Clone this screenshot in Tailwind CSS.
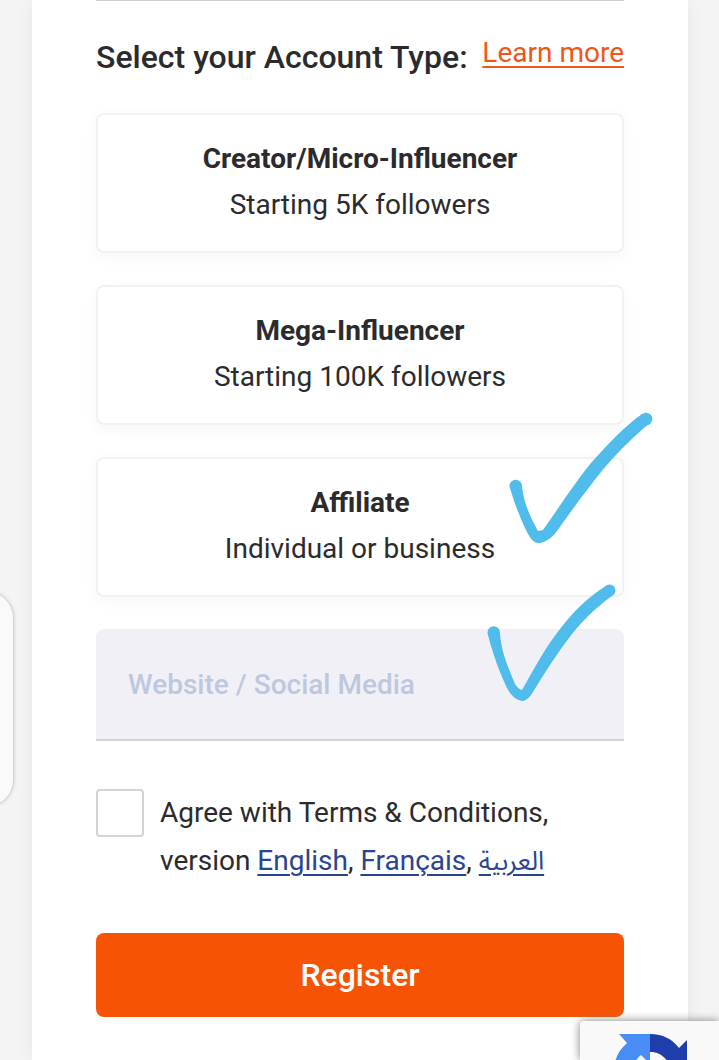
<!DOCTYPE html>
<html lang="en">
<head>
    <meta charset="UTF-8">
    <meta name="viewport" content="width=device-width, initial-scale=1.0">
    <title>Register</title>
    <script src="https://cdn.jsdelivr.net/npm/@tailwindcss/browser@4"></script>
</head>

<body class="bg-[#f4f4f4] font-[Roboto,'Noto_Sans',sans-serif] text-[28px] text-[#2b2b2d] overflow-x-hidden">

    <!--Form panel-->
    <main class="mx-8 mr-[31px] min-h-screen bg-white px-16 pb-11 shadow-[0_0_16px_rgba(0,0,0,0.06)]">
        <form>
            <div class="border-t border-[#cfcfcf]"></div>

            <div class="mt-9 mb-9 flex items-start justify-between">
                <h2 class="text-[32px] leading-10 font-medium whitespace-nowrap">Select your Account Type:</h2>
                <a href="#" class="leading-8 whitespace-nowrap text-[#ee5718] underline decoration-2 underline-offset-4">Learn more</a>
            </div>

            <!--Account types-->
            <div class="grid gap-8 text-center leading-[46px]">
                <button type="button" class="rounded-lg border-2 border-[#f1f1f1] bg-white pt-[21px] pb-[23px] shadow-[0_4px_16px_rgba(0,0,0,0.04)]">
                    <span class="block font-bold">Creator/Micro-Influencer</span>
                    <span class="block">Starting 5K followers</span>
                </button>
                <button type="button" class="rounded-lg border-2 border-[#f1f1f1] bg-white pt-[21px] pb-[23px] shadow-[0_4px_16px_rgba(0,0,0,0.04)]">
                    <span class="block font-bold">Mega-Influencer</span>
                    <span class="block">Starting 100K followers</span>
                </button>
                <div class="relative grid">
                    <button type="button" class="rounded-lg border-2 border-[#f1f1f1] bg-white pt-[21px] pb-[23px] shadow-[0_4px_16px_rgba(0,0,0,0.04)]">
                        <span class="block font-bold">Affiliate</span>
                        <span class="block">Individual or business</span>
                    </button>
                    <svg class="pointer-events-none absolute -top-[50px] -right-8 h-[140px] w-[150px]" viewBox="0 0 150 140" fill="#4fbcec" aria-hidden="true">
                        <circle cx="9.7" cy="79" r="6.2"></circle>
                        <circle cx="140" cy="12" r="6.3"></circle>
                        <path d="M4 81C8 95 14 111 21 125C24 131 28 137 34 136C40 135 46 131 51 124C66 103 81 82 100 59C113 44 130 27 143 17L136 7C119 19 101 38 85 56C67 78 52 102 37 123L32 124C25 111 18 98 16 79Z"></path>
                    </svg>
                </div>
            </div>

            <!--Website field-->
            <div class="relative mt-8">
                <input type="text" id="website" aria-label="Website / Social Media" placeholder="Website / Social Media"
                    class="block h-28 w-full rounded-t-lg border-b-2 border-[#d3d2dc] bg-[#f1f0f7] px-8 font-medium placeholder:text-[#bdc8df]">
                <svg class="pointer-events-none absolute -top-[50px] right-2 h-[130px] w-[135px]" viewBox="0 0 135 130" fill="#4fbcec" aria-hidden="true">
                    <circle cx="12.7" cy="53.5" r="6.2"></circle>
                    <circle cx="128.5" cy="11.5" r="6"></circle>
                    <path d="M7 56C12 76 19 94 26 109C30 117 36 122 42 122C46 121 49 118 52 113C64 93 77 73 91 55C104 39 117 27 131 17L125 7C107 18 92 33 79 50C64 69 53 90 41 111Q37 110 34 105C28 90 20 73 19 54Z"></path>
                </svg>
            </div>

            <!--Terms-->
            <div class="mt-12 flex gap-4 leading-[48px]">
                <input type="checkbox" id="terms" class="size-12 shrink-0 appearance-none rounded border-2 border-[#d4d4d4] bg-white checked:bg-[#f75304]">
                <label for="terms">Agree with Terms &amp; Conditions,<br>
                    version <a href="#" class="text-[#2a4590] underline decoration-2 underline-offset-4">English</a>,
                    <a href="#" class="text-[#2a4590] underline decoration-2 underline-offset-4">Français</a>,
                    <a href="#" lang="ar" class="font-['Noto_Sans_Arabic','DejaVu_Sans',sans-serif] text-[26px] leading-none text-[#2a4590] underline decoration-2 underline-offset-4">العربية</a></label>
            </div>

            <button type="submit" class="mt-12 h-[84px] w-full rounded-lg bg-[#f75304] text-[32px] font-medium text-white">Register</button>
        </form>
    </main>

    <!--Side handle-->
    <div class="fixed top-[591px] -left-10 h-[216px] w-[54px] rounded-[28px] border border-[#d2d2d2] bg-[#fafafa] shadow-[0_0_4px_rgba(0,0,0,0.15)]"></div>

    <!--reCAPTCHA badge-->
    <div class="fixed right-0 bottom-0 h-[39px] w-[139px] overflow-hidden rounded-tl bg-[#f9f9f9] shadow-[0_0_10px_#808080]">
        <svg class="ml-[34px] mt-[13px] h-[74px] w-[74px]" viewBox="0 0 74 74" aria-hidden="true">
            <path fill="#1f3dab" d="M36 0C49 0 58 5 65 14L73 6V37H44L54 28C49 21 44 18 36 18Z"></path>
            <path fill="#4b8df6" d="M36 0V30L27 21C22 25 19 31 18 37H0C0 26 4 17 13 9L5 0Z"></path>
            <path fill="#ababab" d="M0 37H30L20 46C28 59 44 59 54 45L65 58C49 79 22 78 8 59L0 67Z"></path>
        </svg>
    </div>
</body>
</html>
